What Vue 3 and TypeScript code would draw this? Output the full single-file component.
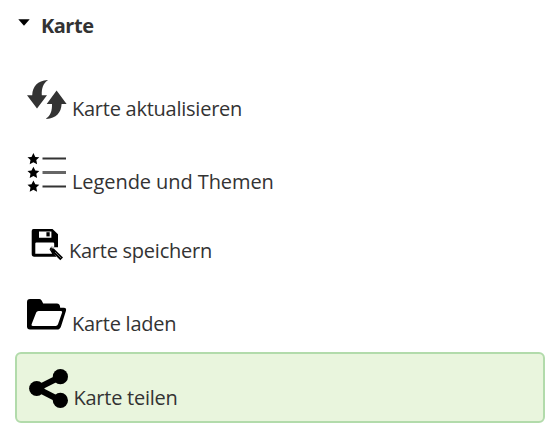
<script setup lang="ts">
import { ref } from 'vue'

interface Entry {
  id: string
  label: string
}

const open = ref(true)
const selected = ref('share')
const entries: Entry[] = [
  { id: 'refresh', label: 'Karte aktualisieren' },
  { id: 'legend', label: 'Legende und Themen' },
  { id: 'save', label: 'Karte speichern' },
  { id: 'load', label: 'Karte laden' },
  { id: 'share', label: 'Karte teilen' },
]
</script>

<template>
  <section class="panel">
    <header class="heading" @click="open = !open">
      <svg class="caret" viewBox="0 0 12 7"><path d="M.3 .3H11.7L6 6.7Z" /></svg>
      <span class="title">Karte</span>
    </header>
    <ul v-show="open" class="menu">
      <li
        v-for="entry in entries"
        :key="entry.id"
        class="entry"
        :class="[entry.id, { selected: selected === entry.id }]"
        @click="selected = entry.id"
      >
        <svg v-if="entry.id === 'refresh'" class="icon dark" viewBox="0 0 40 40">
          <path d="M20.6 0C10.5 .8 5.6 6.3 5.2 15.2H0L10 28.5L20 15.2H14.8C14.5 8.3 16.3 3.2 20.6 .6Z" />
          <path d="M19.3 39C29.3 38.2 34.2 32.7 34.6 24H39.6L29.6 10.5L19.7 24H25C25.2 31 23.4 35.8 19.3 38.3Z" />
        </svg>
        <svg v-else-if="entry.id === 'legend'" class="icon" viewBox="0 0 40 40">
          <g v-for="y in [6, 19.7, 33.4]" :key="y" :transform="`translate(6.4 ${y})`">
            <path d="M0-5.9 1.9-2.1 5.9-1.7 2.9 1.1 3.7 5.3 0 3.3-3.7 5.3-2.9 1.1-5.9-1.7-1.9-2.1Z" />
          </g>
          <path class="rules" d="M15.5 5.5H39M15.5 33.4H39" />
          <path class="rules middle" d="M15.5 19.5H39" />
        </svg>
        <svg v-else-if="entry.id === 'save'" class="icon" viewBox="0 0 34 34">
          <path
            fill-rule="evenodd"
            d="M2.5 0H21.5L27 5.2V18.2L20.5 18.3L19.8 20.2L25.5 27.7H3.2Q.7 27.7 .7 25V2Q.7 0 2.5 0ZM8 2.4V8.8H20.4V2.4ZM5.4 13.4Q4.3 13.4 4.3 14.6V24.8H21.2L18.5 20.2L20.2 17.8L23.2 18V14.6Q23.2 13.4 22 13.4Z"
          />
          <path d="M15.4 3.2H18.7V7.4H15.4Z" />
          <path d="M19.9 18.9L22.8 19.5L32 28.5L29.3 31.3L20.4 22.2Z" />
          <path class="pen-line" d="M24 23L30 29" />
        </svg>
        <svg v-else-if="entry.id === 'load'" class="icon" viewBox="0 0 40 32">
          <path
            fill-rule="evenodd"
            d="M3 0H12.5Q14 0 14.8 1.7L16.2 4.6H29.8Q33 4.6 33.2 8.8H36.8Q39.8 8.8 38.9 12L34 27.4Q33 30.5 30 30.5H3Q0 30.5 0 27.5V3Q0 0 3 0ZM11.5 11.9Q9.8 11.9 9.2 13.6L4.6 25.3Q4 27.1 5.7 27.1H28.7Q30.4 27.1 31 25.3L35.1 13.6Q35.6 11.9 34 11.9Z"
          />
        </svg>
        <svg v-else class="icon" viewBox="0 0 40 40">
          <path class="links" d="M31.4 7.8L8 19.6L31.4 31.4" />
          <circle cx="31.4" cy="7.7" r="7.6" />
          <circle cx="7.7" cy="19.5" r="7.6" />
          <circle cx="31.4" cy="31.4" r="7.6" />
        </svg>
        <span class="label">{{ entry.label }}</span>
      </li>
    </ul>
  </section>
</template>

<style>
body {
  background: #fff;
}
</style>

<style scoped>
.panel {
  box-sizing: border-box;
  width: 558px;
  height: 432px;
  padding: 13px 13px 9px 15px;
  overflow: hidden;
  color: #333;
  font-family: 'Open Sans', 'Noto Sans', sans-serif;
}

.heading {
  display: flex;
  align-items: flex-start;
  gap: 11px;
  height: 51px;
  padding-left: 3px;
  font-size: 20px;
  font-weight: 700;
  line-height: 24px;
  letter-spacing: -0.5px;
  cursor: pointer;
}

.title {
  margin-top: 1px;
}

.caret {
  width: 12px;
  height: 7px;
  margin-top: 6px;
  fill: #000;
}

.menu {
  margin: 0;
  padding: 0;
  list-style: none;
}

.entry {
  display: flex;
  align-items: flex-start;
  box-sizing: border-box;
  height: 73px;
  padding: 14px 10px 0;
  border: 2px solid transparent;
  border-radius: 6px;
  cursor: pointer;
}

.entry.save {
  height: 69px;
  padding-left: 14px;
}

.entry.share {
  height: 71px;
  padding-left: 12px;
}

.entry.selected {
  border-color: #b2dba1;
  border-color: #b2dbab;
  background: #e9f5dd;
}

.icon {
  flex: none;
  width: 40px;
  height: 40px;
  fill: #000;
}

.icon.dark {
  fill: #333;
}

.save .icon {
  width: 34px;
  height: 34px;
  margin-top: 3px;
}

.load .icon {
  height: 32px;
  margin-top: 4px;
}

.share .icon {
  margin-top: 1px;
}

.rules {
  fill: none;
  stroke: #333;
  stroke-width: 2;
}

.rules.middle {
  stroke: #666;
  stroke-width: 3;
}

.pen-line {
  fill: none;
  stroke: #888;
  stroke-width: 0.8;
}

.links {
  fill: none;
  stroke: #000;
  stroke-width: 6.2;
}

.label {
  margin: 17px 0 0 5px;
  font-size: 20px;
  line-height: 24px;
  letter-spacing: -0.25px;
  white-space: nowrap;
}

.legend .label {
  letter-spacing: -0.08px;
}

.save .label {
  margin-top: 13px;
  margin-left: 4px;
}

.share .label {
  margin-top: 18px;
  margin-left: 4.5px;
}
</style>
